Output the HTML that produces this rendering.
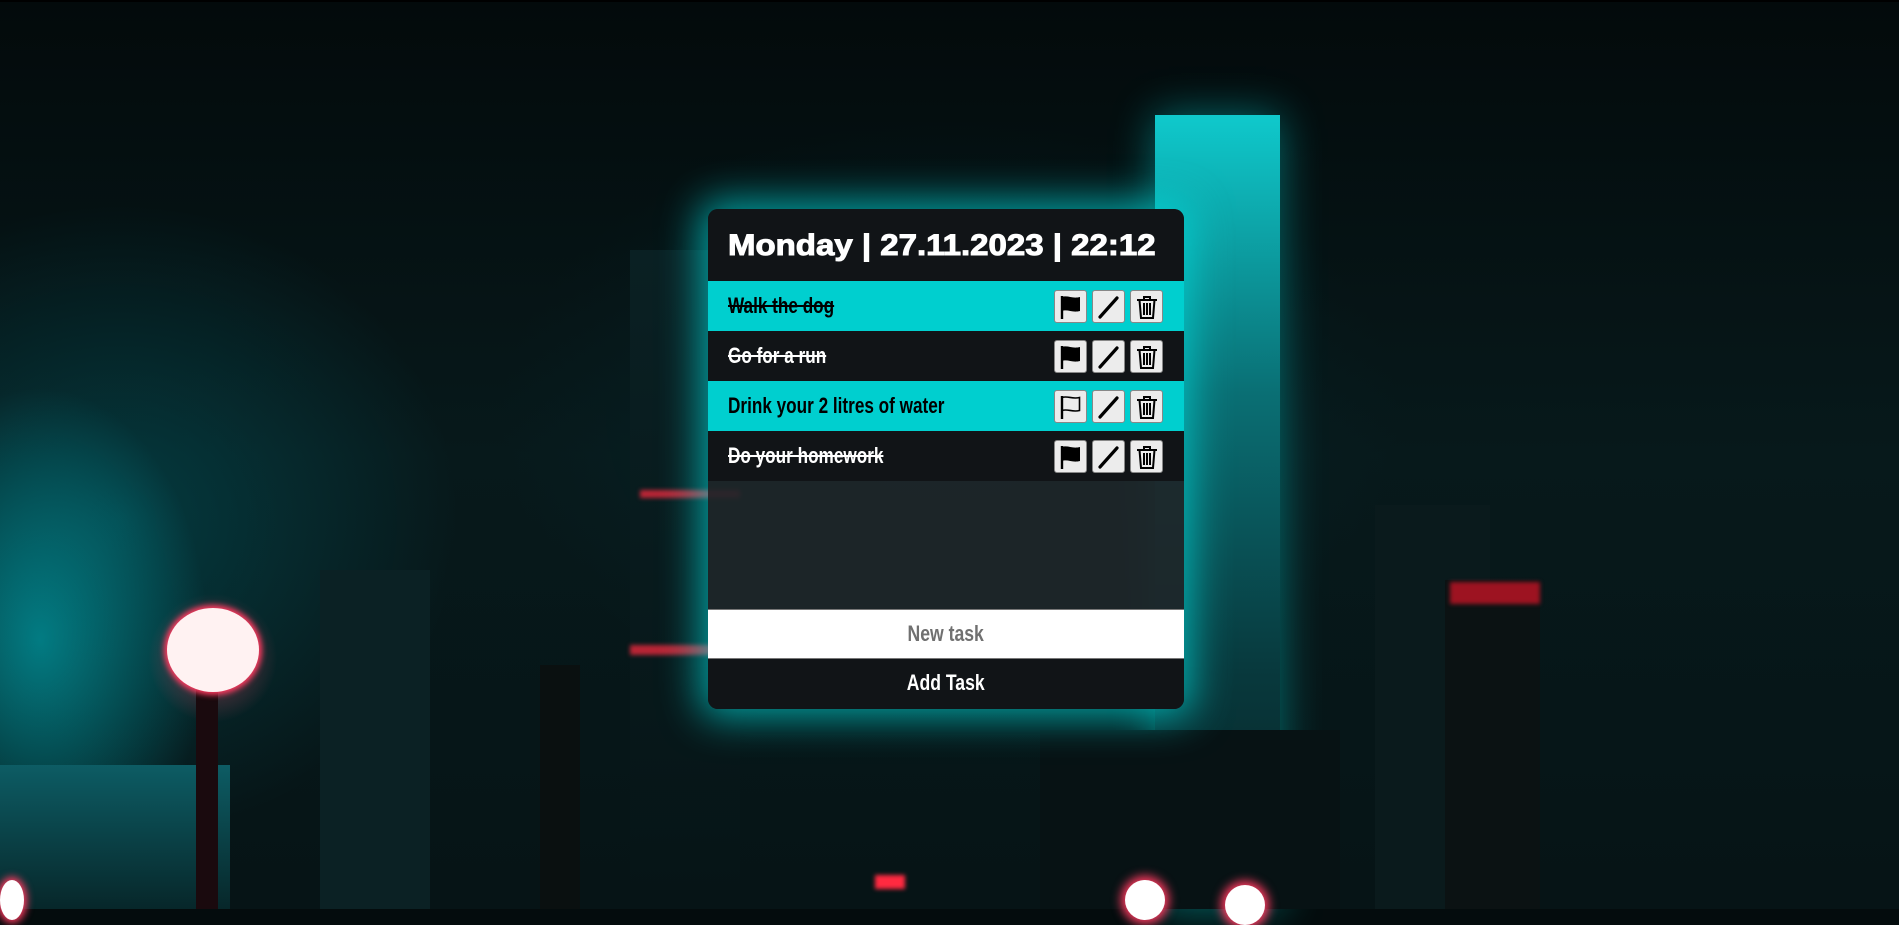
<!DOCTYPE html>
<html><head><meta charset="utf-8"><style>
html,body{margin:0;padding:0;width:1899px;height:909px;overflow:hidden;background:#040c0d;}
.bg{position:absolute;inset:0;background:
radial-gradient(ellipse 240px 360px at 40px 640px, rgba(0,190,200,.55), transparent 70%),
radial-gradient(ellipse 450px 420px at 120px 520px, rgba(0,110,120,.4), transparent 75%),
radial-gradient(ellipse 600px 400px at 950px 420px, rgba(0,60,70,.3), transparent 75%),
linear-gradient(180deg,#030a0b 0%,#07191b 50%,#061416 100%);}
.b{position:absolute;}
.card{position:absolute;left:708px;top:209px;width:476px;height:500px;border-radius:10px;overflow:hidden;background:rgba(30,38,41,.92);box-shadow:0 0 40px 8px rgba(0,220,220,.7);font-family:"Liberation Sans",sans-serif;}
.hdr{height:72px;background:#111417;color:#fff;font-weight:bold;font-size:30px;line-height:74px;padding-left:20px;white-space:nowrap;}
.hdr span{display:inline-block;transform:scaleX(1.1);transform-origin:left center;-webkit-text-stroke:1px #fff;}
.row{height:50px;position:relative;}
.c{background:#00cfcf;color:#000;}
.d{background:#111417;color:#fff;}
.t{position:absolute;left:20px;top:0;line-height:50px;font-weight:bold;font-size:22px;transform:scaleX(.78);transform-origin:left center;white-space:nowrap;}
.s{text-decoration:line-through;text-decoration-thickness:2px;}
.btns{position:absolute;left:346px;top:9px;display:flex;gap:5px;}
.btn{width:31px;height:31px;background:#ececec;border:1px solid #888;border-radius:3px;display:flex;align-items:center;justify-content:center;}
.empty{height:128px;}
.inp{height:48px;background:#fff;border-top:1px solid #777;border-bottom:1px solid #777;text-align:center;line-height:48px;color:#707070;font-weight:bold;font-size:22px;}
.add{height:50px;background:#111417;color:#fff;text-align:center;line-height:48px;font-weight:bold;font-size:22px;}
.sq{display:inline-block;transform:scaleX(.8);}
</style></head><body>
<div class="bg"></div>
<div class="b" style="left:630px;top:250px;width:110px;height:659px;background:linear-gradient(180deg,#0a2023,#061416);"></div>
<div class="b" style="left:640px;top:490px;width:100px;height:8px;background:rgba(230,40,60,.8);filter:blur(2px);"></div>
<div class="b" style="left:630px;top:645px;width:110px;height:10px;background:rgba(230,40,60,.8);filter:blur(2px);"></div>
<div class="b" style="left:1155px;top:115px;width:125px;height:794px;background:linear-gradient(180deg,#0fc9cc,#0a6f74 35%,#08393d 70%,#061e20);box-shadow:0 0 40px rgba(0,220,220,.45);"></div>
<div class="b" style="left:1375px;top:505px;width:115px;height:404px;background:#0a1a1c;"></div>
<div class="b" style="left:1445px;top:580px;width:95px;height:329px;background:#0b1213;"></div>
<div class="b" style="left:1450px;top:582px;width:90px;height:22px;background:rgba(220,20,40,.7);filter:blur(2px);"></div>
<div class="b" style="left:320px;top:570px;width:110px;height:339px;background:#0b2124;"></div>
<div class="b" style="left:0px;top:765px;width:230px;height:144px;background:linear-gradient(180deg,#0d5c64,#07272a);"></div>
<div class="b" style="left:540px;top:665px;width:40px;height:244px;background:#0a1010;"></div>
<div class="b" style="left:1040px;top:730px;width:300px;height:179px;background:#071214;"></div>
<div class="b" style="left:148px;top:593px;width:130px;height:130px;border-radius:50%;background:radial-gradient(circle,rgba(255,80,110,.5),transparent 70%);"></div>
<div class="b" style="left:196px;top:690px;width:22px;height:219px;background:#1a0a0e;"></div>
<div class="b" style="left:167px;top:608px;width:92px;height:84px;border-radius:50%;background:#fff2f2;box-shadow:0 0 6px 3px #ff3a60;"></div>
<div class="b" style="left:1125px;top:880px;width:40px;height:40px;border-radius:50%;background:#fff;box-shadow:0 0 10px 4px #ff3a60;"></div>
<div class="b" style="left:1225px;top:885px;width:40px;height:40px;border-radius:50%;background:#fff;box-shadow:0 0 10px 4px #ff3a60;"></div>
<div class="b" style="left:0;top:880px;width:24px;height:40px;border-radius:50%;background:#fff;box-shadow:0 0 8px 3px #ff3a60;"></div>
<div class="b" style="left:875px;top:875px;width:30px;height:14px;background:#ff2a40;filter:blur(2px);"></div>
<div class="b" style="left:0;top:0;width:1899px;height:2px;background:#000;"></div>

<div class="card">
<div class="hdr"><span>Monday | 27.11.2023 | 22:12</span></div>
<div class="row c"><div class="t s">Walk the dog</div><div class="btns">
<div class="btn"><svg width="28" height="28" viewBox="0 0 28 28"><path d="M5 3v23" stroke="#000" stroke-width="2.4"/><path d="M5 4c6-2 10 2 18 0v14c-8 2-12-2-18 0z" fill="#000"/></svg></div>
<div class="btn"><svg width="28" height="28" viewBox="0 0 28 28"><path d="M5 24L22 5" stroke="#000" stroke-width="3.2" stroke-linecap="round"/></svg></div>
<div class="btn"><svg width="28" height="28" viewBox="0 0 28 28" fill="none" stroke="#000" stroke-width="2"><path d="M4 7h20M11 7V4h6v3M6.5 7l1.5 18h12l1.5-18M11 10v12M14 10v12M17 10v12"/></svg></div>
</div></div>
<div class="row d"><div class="t s">Go for a run</div><div class="btns">
<div class="btn"><svg width="28" height="28" viewBox="0 0 28 28"><path d="M5 3v23" stroke="#000" stroke-width="2.4"/><path d="M5 4c6-2 10 2 18 0v14c-8 2-12-2-18 0z" fill="#000"/></svg></div>
<div class="btn"><svg width="28" height="28" viewBox="0 0 28 28"><path d="M5 24L22 5" stroke="#000" stroke-width="3.2" stroke-linecap="round"/></svg></div>
<div class="btn"><svg width="28" height="28" viewBox="0 0 28 28" fill="none" stroke="#000" stroke-width="2"><path d="M4 7h20M11 7V4h6v3M6.5 7l1.5 18h12l1.5-18M11 10v12M14 10v12M17 10v12"/></svg></div>
</div></div>
<div class="row c"><div class="t">Drink your 2 litres of water</div><div class="btns">
<div class="btn"><svg width="28" height="28" viewBox="0 0 28 28"><path d="M5 3v23" stroke="#000" stroke-width="2.4"/><path d="M5 4.5c6-2 10 2 17.5 0v13c-7.5 2-11.5-2-17.5 0z" fill="none" stroke="#000" stroke-width="1.6"/></svg></div>
<div class="btn"><svg width="28" height="28" viewBox="0 0 28 28"><path d="M5 24L22 5" stroke="#000" stroke-width="3.2" stroke-linecap="round"/></svg></div>
<div class="btn"><svg width="28" height="28" viewBox="0 0 28 28" fill="none" stroke="#000" stroke-width="2"><path d="M4 7h20M11 7V4h6v3M6.5 7l1.5 18h12l1.5-18M11 10v12M14 10v12M17 10v12"/></svg></div>
</div></div>
<div class="row d"><div class="t s">Do your homework</div><div class="btns">
<div class="btn"><svg width="28" height="28" viewBox="0 0 28 28"><path d="M5 3v23" stroke="#000" stroke-width="2.4"/><path d="M5 4c6-2 10 2 18 0v14c-8 2-12-2-18 0z" fill="#000"/></svg></div>
<div class="btn"><svg width="28" height="28" viewBox="0 0 28 28"><path d="M5 24L22 5" stroke="#000" stroke-width="3.2" stroke-linecap="round"/></svg></div>
<div class="btn"><svg width="28" height="28" viewBox="0 0 28 28" fill="none" stroke="#000" stroke-width="2"><path d="M4 7h20M11 7V4h6v3M6.5 7l1.5 18h12l1.5-18M11 10v12M14 10v12M17 10v12"/></svg></div>
</div></div>
<div class="empty"></div>
<div class="inp"><span class="sq">New task</span></div>
<div class="add"><span class="sq">Add Task</span></div>
</div>
</body></html>
